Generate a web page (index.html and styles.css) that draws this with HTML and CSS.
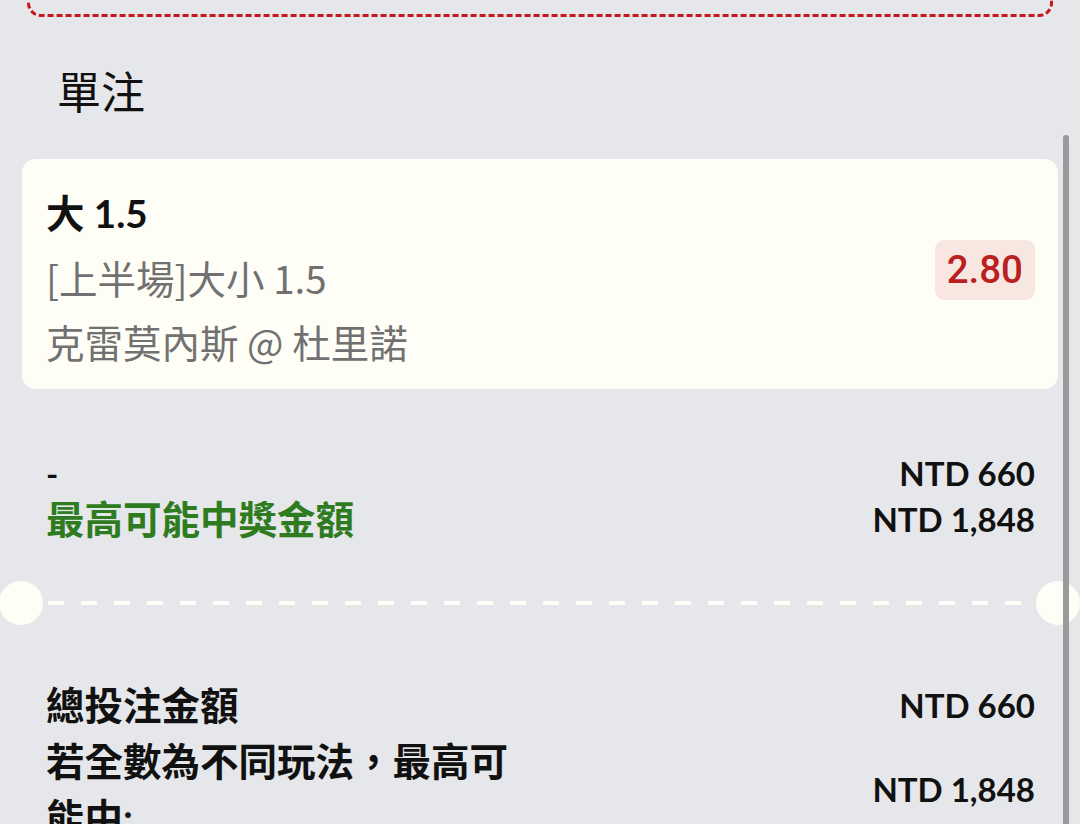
FILE: index.html
```html
<!DOCTYPE html>
<html lang="zh-Hant">
<head>
<meta charset="utf-8">
<title>單注</title>
<link rel="stylesheet" href="styles.css">
</head>
<body>
<div class="page">
  <div class="prev-box"></div>
  <h2 class="section-title">單注</h2>
  <div class="bet-card">
    <div class="bet-info">
      <div class="bet-pick">大 1.5</div>
      <div class="bet-market">[上半場]大小 1.5</div>
      <div class="bet-match">克雷莫內斯 @ 杜里諾</div>
    </div>
    <div class="odds-badge">2.80</div>
  </div>
  <div class="stake-row">
    <div class="stake-labels">
      <div class="stake-dash">-</div>
      <div class="stake-win">最高可能中獎金額</div>
    </div>
    <div class="stake-values">
      <div>NTD 660</div>
      <div>NTD 1,848</div>
    </div>
  </div>
  <div class="ticket-sep"><div class="sep-line"></div></div>
  <div class="totals">
    <div class="total-row">
      <div class="total-label">總投注金額</div>
      <div class="total-value">NTD 660</div>
    </div>
    <div class="total-row">
      <div class="total-label">若全數為不同玩法，最高可能中:</div>
      <div class="total-value">NTD 1,848</div>
    </div>
  </div>
  <div class="scroll-thumb"></div>
</div>
</body>
</html>
```

FILE: styles.css
```css
html, body {
  margin: 0;
  padding: 0;
}
body {
  background: #e5e7ea;
  font-family: "Lato", "Noto Sans CJK TC", sans-serif;
  color: #111;
  overflow: hidden;
}
.page {
  position: relative;
  width: 1080px;
  height: 824px;
  overflow: hidden;
}
.prev-box {
  box-sizing: border-box;
  height: 47px;
  margin: -30px 27px 0 27px;
  border: 3px dashed #c8161d;
  border-radius: 14px;
}
.section-title {
  margin: 45px 0 0 0;
  padding-left: 57px;
  font-size: 44px;
  line-height: 60px;
  font-weight: 400;
  color: #111;
}
.bet-card {
  box-sizing: border-box;
  margin: 37px 22px 0 22px;
  height: 230px;
  padding: 22px 23px 16px 24px;
  background: #fffef6;
  border-radius: 14px;
  display: flex;
  align-items: center;
  justify-content: space-between;
}
.bet-info {
  font-size: 38.5px;
  line-height: 64px;
  align-self: flex-start;
}
.bet-pick {
  font-weight: 700;
  color: #111;
}
.bet-market,
.bet-match {
  font-family: "Noto Sans CJK TC", sans-serif;
  color: #717171;
}
.odds-badge {
  height: 60px;
  line-height: 60px;
  padding: 0 12px;
  margin-bottom: 14px;
  border-radius: 9px;
  background: #f8e7e1;
  color: #b9201f;
  font-family: "Roboto", sans-serif;
  font-weight: 500;
  font-size: 38.5px;
}
.stake-row {
  display: flex;
  justify-content: space-between;
  margin-top: 61px;
  padding: 0 45px 0 46px;
  line-height: 46px;
  font-weight: 700;
}
.stake-labels {
  font-size: 38.5px;
}
.stake-dash {
  font-size: 33px;
}
.stake-win {
  color: #2f7b1f;
}
.stake-values {
  text-align: right;
  font-size: 33px;
  color: #111;
}
.ticket-sep {
  position: relative;
  display: flex;
  align-items: center;
  height: 44px;
  margin: 39px 22px 0 22px;
}
.ticket-sep::before,
.ticket-sep::after {
  content: "";
  position: absolute;
  top: 0;
  width: 44px;
  height: 44px;
  border-radius: 50%;
  background: #fffef6;
}
.ticket-sep::before {
  left: -23px;
}
.ticket-sep::after {
  right: -22px;
}
.sep-line {
  flex: 1;
  margin: 0 25px 0 26px;
  height: 4px;
  background: repeating-linear-gradient(90deg, #fffef6 0 16px, transparent 16px 33px);
}
.totals {
  margin-top: 52px;
  padding: 0 45px 0 46px;
  font-weight: 700;
}
.total-row {
  display: flex;
  justify-content: space-between;
  align-items: center;
}
.total-label {
  flex: 0 0 50%;
  font-size: 38.5px;
  line-height: 56px;
}
.total-value {
  font-size: 33px;
  line-height: 56px;
  text-align: right;
}
.scroll-thumb {
  position: absolute;
  left: 1063px;
  top: 135px;
  width: 6px;
  height: 720px;
  border-radius: 3px;
  background: #9a9a9a;
}
```
